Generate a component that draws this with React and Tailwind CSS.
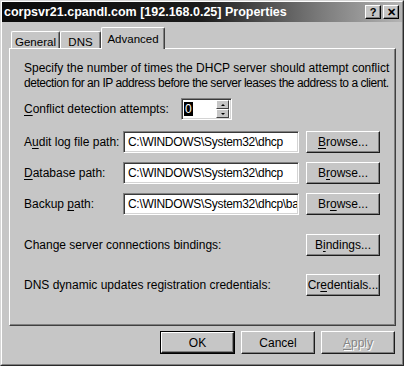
import React from 'react';

const FACE = 'bg-[#c6c6c6]';

// raised 3D push button (classic look)
const Btn = ({ children, disabled, w = 'w-[74px]', h = 'h-[22px]' }) => (
  <div
    className={`${w} ${h} shrink-0 ${FACE} border border-t-white border-l-white border-r-[#1c1c1c] border-b-[#1c1c1c] shadow-[inset_-1px_-1px_0_#808080] flex items-center justify-center text-[12px] leading-none ${
      disabled ? 'text-[#858585] [text-shadow:1px_1px_0_#ffffff]' : 'text-black'
    }`}
  >
    {children}
  </div>
);

// sunken edit box
const Edit = ({ children, className = '' }) => (
  <div
    className={`h-[22px] shrink-0 bg-white border border-t-[#808080] border-l-[#808080] border-r-white border-b-white shadow-[inset_1px_1px_0_#3a3a3a,inset_-1px_-1px_0_#d4d4d4] flex items-center pl-[4px] pr-[1px] text-[12px] tracking-[-0.3px] text-black overflow-hidden ${className}`}
  >
    <div className="w-full overflow-hidden whitespace-nowrap">{children}</div>
  </div>
);

const U = ({ children }) => <span className="underline underline-offset-[2px]">{children}</span>;

const Tab = ({ children, active, w }) => (
  <div
    className={`${w} ${FACE} flex justify-center border-t border-l border-r border-t-white border-l-white border-r-[#404040] shadow-[inset_-1px_0_0_#808080] rounded-t-[2px] text-[11.5px] text-black ${
      active ? 'h-[22px] relative z-10 -mb-px pt-[3px]' : 'h-[17px] pt-[2px]'
    }`}
  >
    {children}
  </div>
);

const PathRow = ({ label, value, browse, className = '' }) => (
  <div className={`flex items-center ${className}`}>
    <div className="w-[99px] shrink-0 text-[12px]">{label}</div>
    <Edit className="w-[176px]">{value}</Edit>
    <div className="ml-[7px] shrink-0">
      <Btn>{browse}</Btn>
    </div>
  </div>
);

const CapBtn = ({ children }) => (
  <div className={`w-[16px] h-[14px] ${FACE} border border-t-white border-l-white border-r-black border-b-black shadow-[inset_-1px_-1px_0_#808080] flex items-center justify-center text-[11px] font-bold leading-none text-black`}>
    {children}
  </div>
);

export default function App() {
  return (
    <div className={`w-[404px] h-[366px] ${FACE} border border-t-[#d6d6d6] border-l-[#d6d6d6] border-r-[#2a2a2a] border-b-[#2a2a2a] font-['Liberation_Sans',Arial,sans-serif] overflow-hidden`}>
      <div className="h-full border border-t-white border-l-white border-r-[#808080] border-b-[#808080] flex flex-col">
        {/* title bar */}
        <div className="h-[20px] shrink-0 flex items-center pl-[2px] pr-[3px] bg-[linear-gradient(to_right,#0b0b0b_0%,#1c1c1c_50%,#7c7c7c_80%,#b4b4b4_100%)]">
          <div className="flex-1 text-white font-bold text-[12.5px] whitespace-nowrap">
            corpsvr21.cpandl.com [192.168.0.25] Properties
          </div>
          <div className="flex gap-[2px]">
            <CapBtn>?</CapBtn>
            <CapBtn>✕</CapBtn>
          </div>
        </div>

        {/* tabs */}
        <div className="mt-[4px] pl-[9px] flex items-end h-[22px]">
          <Tab w="w-[49px]">General</Tab>
          <Tab w="w-[41px]">DNS</Tab>
          <Tab w="w-[64px]" active>Advanced</Tab>
        </div>

        {/* panel */}
        <div className="ml-[7px] w-[387px] h-[278px] border border-t-white border-l-white border-r-[#404040] border-b-[#404040] shadow-[inset_-1px_-1px_0_#808080] pl-[14px] pt-[12px] text-black text-[12px]">
          <div className="leading-[15px] whitespace-nowrap">
            <p>Specify the number of times the DHCP server should attempt conflict</p>
            <p className="tracking-[-0.45px]">
              detection for an IP address before the server leases the address to a client.
            </p>
          </div>

          <div className="flex items-center mt-[7px]">
            <div className="w-[157px] shrink-0">
              <U>C</U>onflict detection attempts:
            </div>
            <div className="w-[51px] h-[22px] bg-white border border-t-[#808080] border-l-[#808080] border-r-white border-b-white shadow-[inset_1px_1px_0_#3a3a3a,inset_-1px_-1px_0_#d4d4d4] flex items-center pl-[2px] pr-[2px]">
              <div className="flex-1">
                <span className="bg-black text-white px-px leading-[14px] inline-block">0</span>
              </div>
              <div className="flex flex-col">
                <div className={`w-[13px] h-[9px] ${FACE} border border-t-white border-l-white border-r-[#404040] border-b-[#404040] flex items-center justify-center`}>
                  <div className="w-0 h-0 border-l-[2px] border-r-[2px] border-b-[2px] border-l-transparent border-r-transparent border-b-black" />
                </div>
                <div className={`w-[13px] h-[9px] ${FACE} border border-t-white border-l-white border-r-[#404040] border-b-[#404040] flex items-center justify-center`}>
                  <div className="w-0 h-0 border-l-[2px] border-r-[2px] border-t-[2px] border-l-transparent border-r-transparent border-t-black" />
                </div>
              </div>
            </div>
          </div>

          <PathRow
            className="mt-[11px]"
            label={<>A<U>u</U>dit log file path:</>}
            value="C:\WINDOWS\System32\dhcp"
            browse={<><U>B</U>rowse...</>}
          />
          <PathRow
            className="mt-[9px]"
            label={<><U>D</U>atabase path:</>}
            value="C:\WINDOWS\System32\dhcp"
            browse={<>B<U>r</U>owse...</>}
          />
          <PathRow
            className="mt-[9px]"
            label={<>Backup <U>p</U>ath:</>}
            value="C:\WINDOWS\System32\dhcp\ba"
            browse={<>Br<U>o</U>wse...</>}
          />

          <div className="flex items-center mt-[19px]">
            <div className="w-[282px] shrink-0">Change server connections bindings:</div>
            <Btn>B<U>i</U>ndings...</Btn>
          </div>
          <div className="flex items-center mt-[18px]">
            <div className="w-[282px] shrink-0">DNS dynamic updates registration credentials:</div>
            <Btn>Cr<U>e</U>dentials...</Btn>
          </div>
        </div>

        {/* dialog buttons */}
        <div className="mt-[5px] pr-[7px] flex justify-end gap-[6px]">
          <div className="border border-black">
            <Btn w="w-[73px]" h="h-[21px]">OK</Btn>
          </div>
          <Btn h="h-[23px]">Cancel</Btn>
          <Btn h="h-[23px]" disabled>
            <U>A</U>pply
          </Btn>
        </div>
      </div>
    </div>
  );
}
